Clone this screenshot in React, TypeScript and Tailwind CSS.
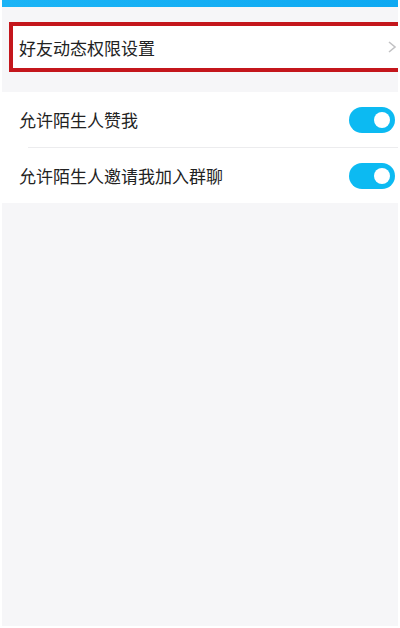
const FONT = {
  fontFamily: '"Noto Sans CJK SC", "Noto Sans", sans-serif',
};

function Toggle() {
  return (
    <div className="flex h-[26px] w-[46px] items-center justify-end rounded-full bg-[#0cbaf2] pr-[5px]">
      <div className="h-[16px] w-[16px] rounded-full bg-white" />
    </div>
  );
}

function SwitchRow({ label }: { label: string }) {
  return (
    <div className="flex h-[55px] items-center justify-between pl-[17px] pr-[3px]">
      <span className="text-[17px] leading-none text-[#222]">{label}</span>
      <Toggle />
    </div>
  );
}

export default function App() {
  return (
    <div className="h-[628px] w-[400px] bg-white px-[2px] pb-[2px]" style={FONT}>
      <div className="flex h-full flex-col bg-[#f6f6f8]">
        <div className="h-[7px] bg-gradient-to-r from-[#1bb4f6] to-[#0ea9f2]" />
        <div className="h-[15px]" />

        <div className="ml-[7px] flex h-[50px] items-center justify-between border-4 border-r-0 border-[#c4161c] bg-white pl-[6px] pr-[1px]">
          <span className="text-[17px] leading-none text-[#222]">好友动态权限设置</span>
          <svg width="10" height="12" viewBox="0 0 10 12" fill="none">
            <path d="M2 1l6 5-6 5" stroke="#c2c2c4" strokeWidth="1.6" />
          </svg>
        </div>

        <div className="h-[20px]" />

        <div className="bg-white">
          <SwitchRow label="允许陌生人赞我" />
          <div className="ml-[26px] h-px bg-[#ececee]" />
          <SwitchRow label="允许陌生人邀请我加入群聊" />
        </div>
      </div>
    </div>
  );
}
